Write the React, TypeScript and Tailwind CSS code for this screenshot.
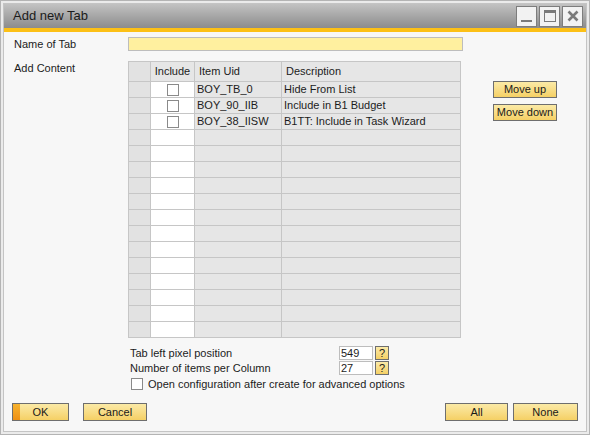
import React from 'react';

// SAP B1 style dialog: "Add new Tab"

const ROWS = [
  { uid: 'BOY_TB_0', desc: 'Hide From List' },
  { uid: 'BOY_90_IIB', desc: 'Include in B1 Budget' },
  { uid: 'BOY_38_IISW', desc: 'B1TT: Include in Task Wizard' },
];
const TOTAL_ROWS = 16;

const font = { fontFamily: '"Liberation Sans", Arial, sans-serif' };

function YellowButton({ label, className, primary }: { label: string; className: string; primary?: boolean }) {
  return (
    <button
      className={`relative flex items-center justify-center border border-[#6e6e6e] bg-gradient-to-b from-[#fbeaa6] to-[#f5d064] text-[11px] text-[#1a1a1a] ${className}`}
    >
      {primary && <span className="absolute left-0 top-0 bottom-0 w-[7px] bg-gradient-to-b from-[#f7b32e] to-[#ee8f12]" />}
      <span className="relative">{label}</span>
    </button>
  );
}

function CheckBox() {
  return <span className="block h-[12px] w-[12px] border border-[#8a8a8a] bg-white" />;
}

function TitleButton({ children }: { children: React.ReactNode }) {
  return (
    <div className="flex h-[21px] w-[21px] items-center justify-center border border-[#7d7d7d] bg-[#f2f2f2]">
      {children}
    </div>
  );
}

export default function App() {
  const emptyRows = TOTAL_ROWS - ROWS.length;
  return (
    <div className="h-[435px] w-[590px] border border-[#b4b4b4] bg-[#ebebeb] p-[2px]" style={font}>
      <div className="flex h-full flex-col border border-[#c4c4c4]">
        {/* title bar */}
        <div className="flex h-[24px] items-center justify-between bg-gradient-to-b from-[#c2c2c2] to-[#8c8c8c] pl-[9px] pr-[3px]">
          <span className="text-[13px] text-[#1b1b1b]">Add new Tab</span>
          <div className="flex gap-[2px]">
            <TitleButton>
              <span className="mt-[10px] block h-[2px] w-[11px] bg-[#7a7a7a]" />
            </TitleButton>
            <TitleButton>
              <span className="block h-[12px] w-[12px] border border-[#7a7a7a] border-t-[3px]" />
            </TitleButton>
            <TitleButton>
              <svg width="12" height="12" viewBox="0 0 12 12">
                <path d="M1.5 1.5 L10.5 10.5 M10.5 1.5 L1.5 10.5" stroke="#7a7a7a" strokeWidth="2.6" />
              </svg>
            </TitleButton>
          </div>
        </div>
        <div className="h-[4px] bg-[#fcc016]" />

        {/* body */}
        <div className="flex flex-1 flex-col bg-[#f7f7f7] pl-[9px] text-[11px] text-[#1c1c1c]">
          <div className="mt-[5px] flex h-[14px] items-center">
            <span className="w-[115px] pl-[1px] leading-none">Name of Tab</span>
            <div className="h-[14px] w-[335px] border border-[#bdbdbd] bg-[#fff09f]" />
          </div>

          <div className="mt-[10px] flex">
            <span className="w-[115px] pl-[1px] pt-[2px] leading-none">Add Content</span>
            <table className="w-[333px] border-collapse border border-[#c6c6c6] bg-[#e6e6e6] leading-none">
              <thead>
                <tr className="h-[20px]">
                  <th className="w-[22px] border border-[#c6c6c6] bg-[#e2e2e2]" />
                  <th className="w-[44px] border border-[#c6c6c6] text-center font-normal">Include</th>
                  <th className="w-[87px] border border-[#c6c6c6] pl-[4px] text-left font-normal">Item Uid</th>
                  <th className="border border-[#c6c6c6] pl-[4px] text-left font-normal">Description</th>
                </tr>
              </thead>
              <tbody>
                {ROWS.map((r) => (
                  <tr key={r.uid} className="h-[16px]">
                    <td className="border border-[#c6c6c6] bg-[#e2e2e2]" />
                    <td className="border border-[#c6c6c6] bg-white">
                      <div className="flex justify-center">
                        <CheckBox />
                      </div>
                    </td>
                    <td className="border border-[#c6c6c6] pl-[2px]">{r.uid}</td>
                    <td className="border border-[#c6c6c6] pl-[2px]">{r.desc}</td>
                  </tr>
                ))}
                {Array.from({ length: emptyRows }).map((_, i) => (
                  <tr key={i} className="h-[16px]">
                    <td className="border border-[#c6c6c6] bg-[#e2e2e2]" />
                    <td className="border border-[#c6c6c6] bg-white" />
                    <td className="border border-[#c6c6c6]" />
                    <td className="border border-[#c6c6c6]" />
                  </tr>
                ))}
              </tbody>
            </table>
            <div className="ml-[32px] mt-[20px] flex flex-col gap-[6px]">
              <YellowButton label="Move up" className="h-[17px] w-[64px]" />
              <YellowButton label="Move down" className="h-[17px] w-[64px]" />
            </div>
          </div>

          <div className="ml-[117px] mt-[8px] flex flex-col">
            <div className="flex h-[14px] items-center">
              <span className="w-[209px] leading-none">Tab left pixel position</span>
              <div className="flex h-[14px] w-[34px] items-center border border-[#bdbdbd] bg-white pl-[1px] leading-none">549</div>
              <YellowButton label="?" className="ml-[2px] h-[14px] w-[14px]" />
            </div>
            <div className="mt-[1px] flex h-[14px] items-center">
              <span className="w-[209px] leading-none">Number of items per Column</span>
              <div className="flex h-[14px] w-[34px] items-center border border-[#bdbdbd] bg-white pl-[1px] leading-none">27</div>
              <YellowButton label="?" className="ml-[2px] h-[14px] w-[14px]" />
            </div>
            <div className="ml-[1px] mt-[2px] flex h-[14px] items-center">
              <CheckBox />
              <span className="ml-[5px] leading-none">Open configuration after create for advanced options</span>
            </div>
          </div>

          <div className="mt-[12px] flex pr-[8px]">
            <YellowButton label="OK" primary className="ml-[-1px] h-[18px] w-[57px]" />
            <YellowButton label="Cancel" className="ml-[14px] h-[18px] w-[64px]" />
            <div className="flex-1" />
            <YellowButton label="All" className="h-[18px] w-[63px]" />
            <YellowButton label="None" className="ml-[5px] h-[18px] w-[65px]" />
          </div>
        </div>
      </div>
    </div>
  );
}
